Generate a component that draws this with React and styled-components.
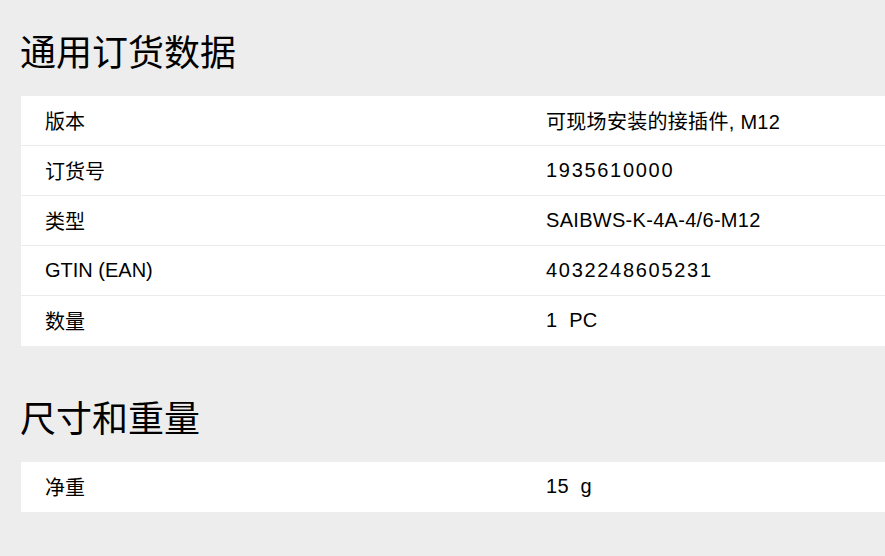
import React from 'react';
import styled, { createGlobalStyle } from 'styled-components';

const GlobalStyle = createGlobalStyle`
  html, body {
    margin: 0;
    padding: 0;
    background-color: #ededed;
  }

  body {
    font-family: "Liberation Sans", "Noto Sans CJK SC", sans-serif;
    color: #000;
  }
`;

const Page = styled.main`
  padding: 27px 0 0 21px;
`;

const Section = styled.section`
  & + & {
    margin-top: 47px;
  }
`;

const Title = styled.h2`
  margin: 0 0 ${props => props.$gap || 23}px -1px;
  font-family: "Noto Sans CJK SC", "Liberation Sans", sans-serif;
  font-size: 36px;
  font-weight: 400;
  line-height: 46px;
`;

const Table = styled.div`
  background-color: #fff;
`;

const Row = styled.div`
  display: grid;
  grid-template-columns: 501px 1fr;
  align-items: center;
  height: 50px;
  box-sizing: border-box;
  padding-left: 24px;
  border-bottom: 1px solid #ebebeb;

  &:last-child {
    border-bottom-color: #fff;
  }
`;

const Label = styled.span`
  font-size: 20px;
`;

const Value = styled.span`
  font-size: 20px;
  white-space: pre;
  letter-spacing: ${props => (props.$digits ? '1.7px' : '0.3px')};
`;

const orderData = [
  { label: '版本', value: '可现场安装的接插件, M12' },
  { label: '订货号', value: '1935610000', digits: true },
  { label: '类型', value: 'SAIBWS-K-4A-4/6-M12' },
  { label: 'GTIN (EAN)', value: '4032248605231', digits: true },
  { label: '数量', value: '1  PC' },
];

const sizeData = [{ label: '净重', value: '15  g' }];

const DataTable = ({ rows }) => (
  <Table>
    {rows.map(row => (
      <Row key={row.label}>
        <Label>{row.label}</Label>
        <Value $digits={row.digits}>{row.value}</Value>
      </Row>
    ))}
  </Table>
);

const App = () => (
  <>
    <GlobalStyle />
    <Page>
      <Section>
        <Title>通用订货数据</Title>
        <DataTable rows={orderData} />
      </Section>
      <Section>
        <Title $gap={23}>尺寸和重量</Title>
        <DataTable rows={sizeData} />
      </Section>
    </Page>
  </>
);

export default App;
